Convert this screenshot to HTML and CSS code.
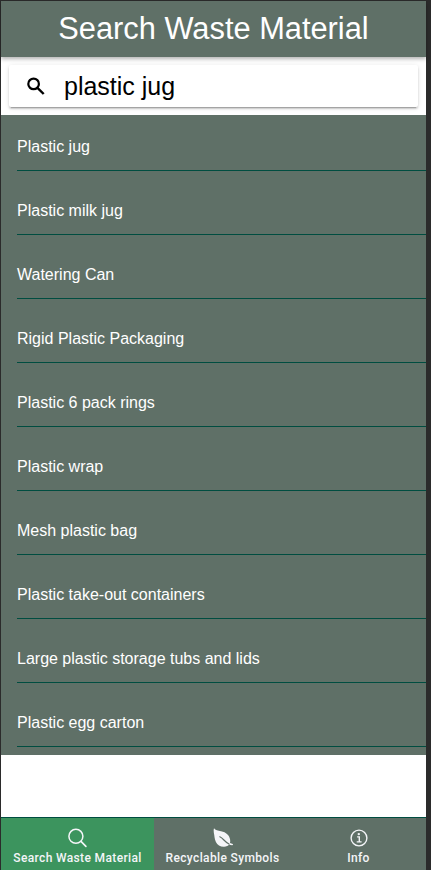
FILE: index.html
```html
<!DOCTYPE html>
<html lang="en">
<head>
<meta charset="utf-8">
<title>Search Waste Material</title>
<link rel="stylesheet" href="styles.css">
</head>
<body>
<div class="app">
  <header class="header"><h1>Search Waste Material</h1></header>
  <div class="search">
    <div class="search-box">
      <svg class="search-icon" viewBox="0 0 18 18"><circle cx="6.6" cy="6.9" r="5.3" fill="none" stroke="#000" stroke-width="2.2"/><path d="M10.5 10.8L16.7 17" stroke="#000" stroke-width="2.4"/></svg>
      <span>plastic jug</span>
    </div>
  </div>
  <ul class="list">
    <li>Plastic jug</li>
    <li>Plastic milk jug</li>
    <li>Watering Can</li>
    <li>Rigid Plastic Packaging</li>
    <li>Plastic 6 pack rings</li>
    <li>Plastic wrap</li>
    <li>Mesh plastic bag</li>
    <li>Plastic take-out containers</li>
    <li>Large plastic storage tubs and lids</li>
    <li>Plastic egg carton</li>
  </ul>
  <nav class="tabs">
    <a class="tab active">
      <svg viewBox="0 0 22 22"><circle cx="8.9" cy="9.3" r="7" fill="none" stroke="currentColor" stroke-width="1.5"/><path d="M14 14.4L18.9 19.3" stroke="currentColor" stroke-width="1.7" stroke-linecap="round"/></svg>
      <span>Search Waste Material</span>
    </a>
    <a class="tab">
      <svg viewBox="0 0 22 22"><path fill="currentColor" d="M2 1.2C3.3 3.4 6 3.6 9 4.2C14.2 5.2 17.4 8.2 18.1 12.4C18.3 13.9 18.3 15 18 15.9L20.8 16.9Q21.5 17.8 20.3 18.2C18.9 18.1 17.9 17.9 17 17.4C16.2 18.7 14.5 19.6 12 19.7C8.4 19.8 5.3 18 3.9 15C2.3 11.6 2.6 8.9 1.8 5.6Q1.3 3 2 1.2Z"/><path class="leaf-vein" d="M7.8 9.8C11.2 11.2 12.5 14.7 17 17"/></svg>
      <span>Recyclable Symbols</span>
    </a>
    <a class="tab">
      <svg viewBox="0 0 22 22"><circle cx="11" cy="11" r="7.9" fill="none" stroke="currentColor" stroke-width="1.4"/><circle cx="10.8" cy="7.1" r="1.2" fill="currentColor"/><path d="M9.1 9.9H11.3V14.8M8.7 14.9H13.6" fill="none" stroke="currentColor" stroke-width="1.4"/></svg>
      <span>Info</span>
    </a>
  </nav>
</div>
</body>
</html>
```

FILE: styles.css
```css
* { box-sizing: border-box; }
body {
  margin: 0;
  background: #2b2b2b;
  font-family: "Liberation Sans", Arial, sans-serif;
}
.app {
  display: flex;
  flex-direction: column;
  height: 870px;
  margin-right: 5px;
  border: solid #2b2b2b;
  border-width: 1px 0 0 1px;
  background: #fff;
}
.header {
  height: 56px;
  background: #5f7067;
  color: #fff;
  text-align: center;
  box-shadow: 0 2px 4px rgba(0, 0, 0, .3);
}
.header h1 {
  margin: 0;
  font-size: 30.8px;
  font-weight: 400;
  line-height: 55px;
}
.search { padding: 8px; }
.search-box {
  display: flex;
  align-items: center;
  height: 42px;
  padding-left: 18px;
  border-radius: 2px;
  background: #fff;
  box-shadow: 0 2px 2px rgba(0, 0, 0, .14), 0 3px 1px -2px rgba(0, 0, 0, .2), 0 1px 5px rgba(0, 0, 0, .12);
  font-size: 25px;
}
.search-icon {
  width: 18px;
  height: 18px;
  margin-right: 19px;
}
.list {
  display: flow-root;
  margin: 0;
  padding: 0 0 0 16px;
  background: #5f7067;
  color: #fff;
  list-style: none;
  font-size: 16px;
}
.list li {
  height: 48px;
  margin: 8px 0;
  border-bottom: 1px solid #004d40;
  line-height: 47px;
}
.list li + li { margin-top: 16px; }
.tabs {
  display: grid;
  grid-template-columns: 153px 137px 1fr;
  height: 53px;
  margin-top: auto;
  border-top: 1px solid #004d40;
  background: #5f7067;
  color: #f4f5f8;
}
.tab {
  display: flex;
  flex-direction: column;
  align-items: center;
  padding-top: 9px;
  font: 500 12px/18px Roboto, sans-serif;
  letter-spacing: .36px;
  white-space: nowrap;
}
.tab.active { background: #3c945e; }
.tab svg {
  width: 22px;
  height: 22px;
}
.leaf-vein {
  fill: none;
  stroke: #5f7067;
  stroke-width: 1.2;
  stroke-linecap: round;
}
```
